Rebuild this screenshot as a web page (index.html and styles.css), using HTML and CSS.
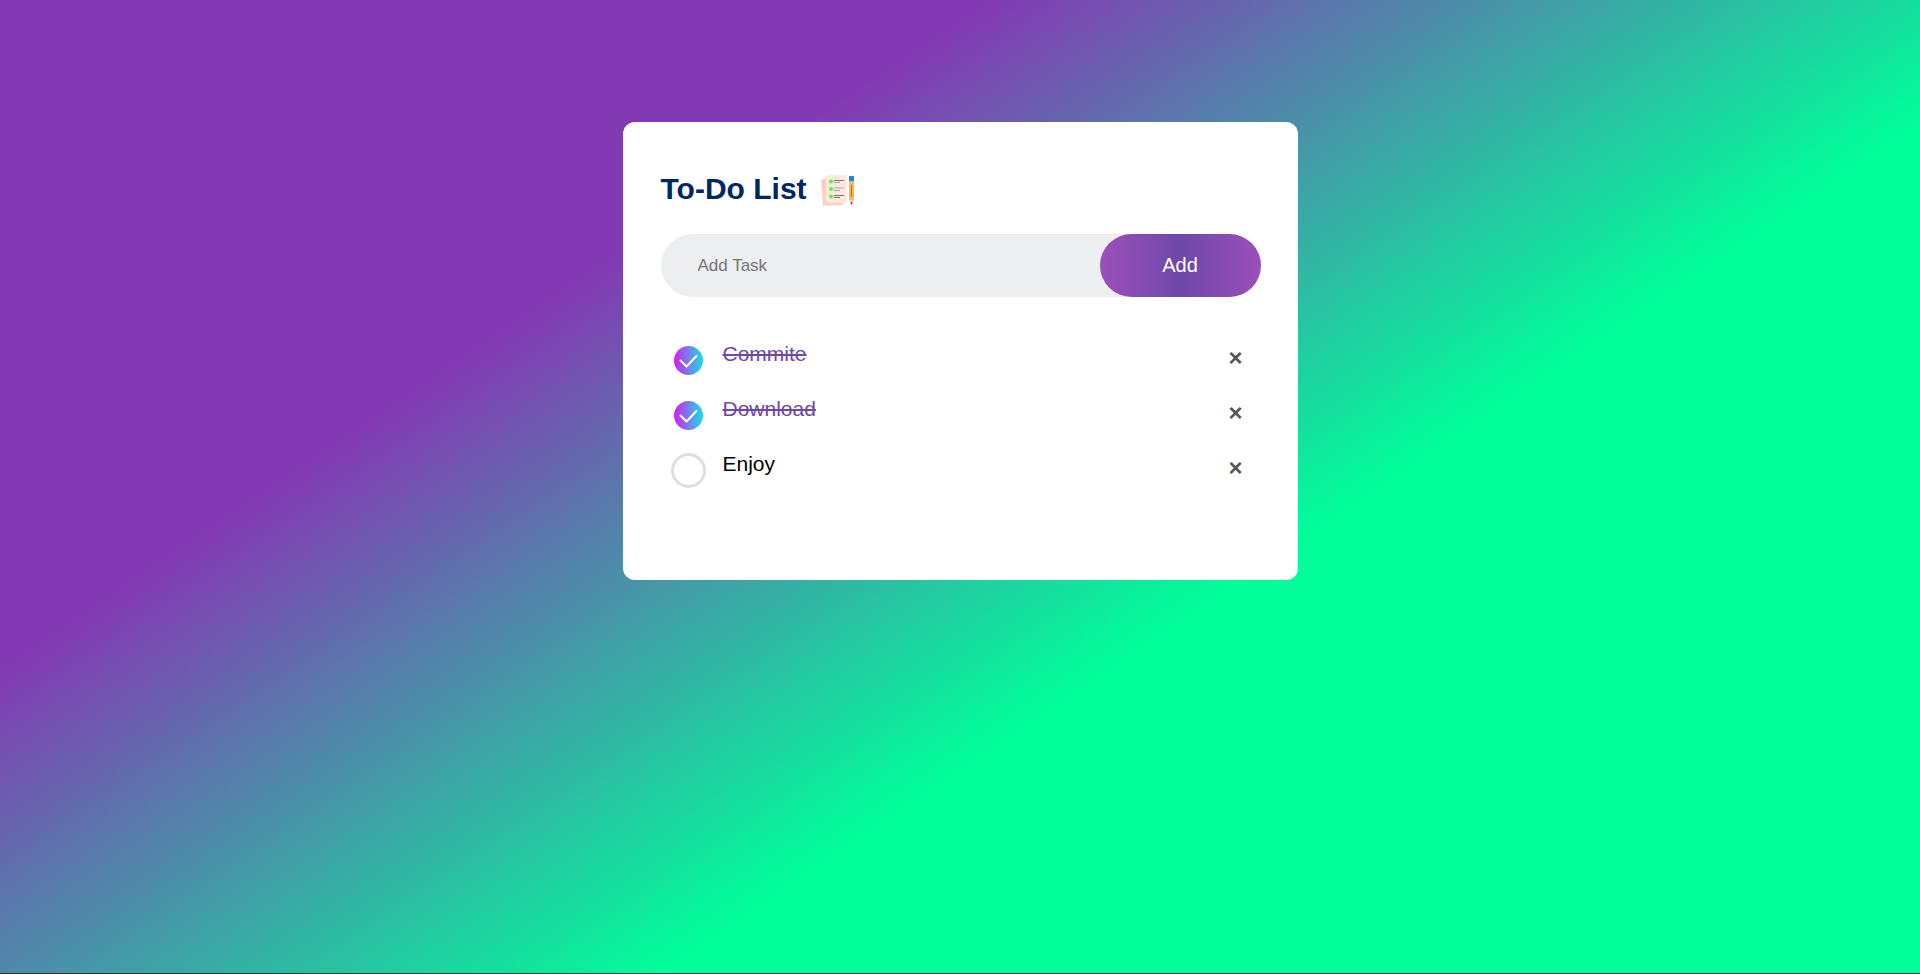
FILE: index.html
```
<!DOCTYPE html>
<html lang="en">
<head>
<meta charset="utf-8">
<title>To-Do List</title>
<link rel="stylesheet" href="styles.css">
</head>
<body>
<main class="todo-app">
  <h1 class="title">To-Do List
    <svg class="title-icon" viewBox="0 0 38 38" aria-hidden="true">
      <path fill="#ffd0c2" d="M2 7l20-1 2 27-20 1z"/>
      <rect x="7" y="3" width="21" height="28" rx="2" fill="#ffe8dc"/>
      <g fill="#3dff3d"><circle cx="12" cy="9.500" r="2"/><circle cx="12" cy="17" r="2"/><circle cx="12" cy="24.500" r="2"/></g>
      <path stroke="#84668f" stroke-width="1" d="M15 8.500h10M15 23.500h10"/>
      <path stroke="#b39aae" stroke-width="1" d="M15 16h10M15 10.500h6M15 18.500h6"/>
      <path stroke="#84668f" stroke-width="1" d="M15 25.500h6"/>
      <path fill="#0c87fa" d="M30 5q0-1 1-1h3q1 0 1 1v4h-5z"/>
      <path fill="#ffb74f" d="M30 9h5v19h-5z"/>
      <path stroke="#a1743c" stroke-width="1" d="M32.500 13v12"/>
      <path fill="#ffc2cc" d="M30 28h5l-1.500 4h-2z"/>
      <path fill="#3a2a3c" d="M31.500 30.500h2l-1 2.500z"/>
    </svg>
  </h1>
  <form class="entry" onsubmit="return false">
    <input class="entry-input" type="text" placeholder="Add Task" aria-label="Add Task">
    <button class="entry-button" type="submit">Add</button>
  </form>
  <ul class="tasks">
    <li class="task">
      <label class="task-label">
        <span class="mark">
          <input class="mark-box" type="checkbox" checked>
          <svg class="mark-tick" viewBox="0 0 35 35" aria-hidden="true"><path d="M9.500 17.500l6 6L25.500 13"/></svg>
        </span>
        <span class="task-text">Commite</span>
      </label>
      <button class="remove" type="button" aria-label="Remove Commite">×</button>
    </li>
    <li class="task">
      <label class="task-label">
        <span class="mark">
          <input class="mark-box" type="checkbox" checked>
          <svg class="mark-tick" viewBox="0 0 35 35" aria-hidden="true"><path d="M9.500 17.500l6 6L25.500 13"/></svg>
        </span>
        <span class="task-text">Download</span>
      </label>
      <button class="remove" type="button" aria-label="Remove Download">×</button>
    </li>
    <li class="task">
      <label class="task-label">
        <span class="mark">
          <input class="mark-box" type="checkbox">
          <svg class="mark-tick" viewBox="0 0 35 35" aria-hidden="true"><path d="M9.500 17.500l6 6L25.500 13"/></svg>
        </span>
        <span class="task-text">Enjoy</span>
      </label>
      <button class="remove" type="button" aria-label="Remove Enjoy">×</button>
    </li>
  </ul>
</main>
</body>
</html>
```
FILE: styles.css
```
* {
  box-sizing: border-box;
  margin: 0;
  padding: 0;
}

body {
  min-height: 100vh;
  padding: 122px 12px 12px;
  border-bottom: 1px solid #333;
  background: linear-gradient(146deg, #8439b4 29.4%, #00ff9a 62.7%) border-box;
  font-family: "Liberation Sans", Arial, sans-serif;
}

.todo-app {
  max-width: 675px;
  margin: 0 auto;
  padding: 50px 37px 88px 38px;
  border-radius: 12px;
  background: #fff;
}

.title {
  display: flex;
  align-items: flex-start;
  gap: 12px;
  margin-bottom: 27px;
  color: #002765;
  font-size: 30px;
  line-height: 34px;
}

.title-icon {
  width: 38px;
  height: 38px;
  margin-bottom: -3px;
  fill: none;
}

.entry {
  display: flex;
  height: 63px;
  margin-bottom: 30px;
  border-radius: 32px;
  background: #edeef0;
}

.entry-input {
  flex: 1;
  min-width: 0;
  padding: 0 37px;
  border: none;
  outline: none;
  background: transparent;
  font: 17px "Liberation Sans", Arial, sans-serif;
}

.entry-input::placeholder {
  color: #757575;
}

.entry-button {
  width: 161px;
  border: none;
  border-radius: 32px;
  background: linear-gradient(90deg, #9b50ba, #6e48aa, #9b50ba);
  color: #fff;
  font: 20px "Liberation Sans", Arial, sans-serif;
  cursor: pointer;
}

.tasks {
  list-style: none;
}

.task {
  display: flex;
  height: 55px;
  padding: 0 10px;
}

.task-label {
  display: flex;
  flex: 1;
  gap: 17px;
  cursor: pointer;
}

.mark {
  display: grid;
  width: 35px;
  height: 35px;
  margin-top: 16px;
}

.mark-box,
.mark-tick {
  grid-area: 1 / 1;
  width: 35px;
  height: 35px;
}

.mark-box {
  appearance: none;
  border: 3px solid #dedede;
  border-radius: 50%;
}

.mark-box:checked {
  border-color: transparent;
  background: linear-gradient(90deg, #d41ef0, #16e0e8) padding-box;
}

.mark-tick {
  visibility: hidden;
  fill: none;
  stroke: #fff;
  stroke-width: 2;
  stroke-linecap: round;
  stroke-linejoin: round;
}

.mark-box:checked + .mark-tick {
  visibility: visible;
}

.task-text {
  padding-top: 14px;
  color: #000;
  font-size: 21px;
  line-height: 25px;
}

.mark:has(:checked) + .task-text {
  color: #6e48aa;
  text-decoration: line-through;
}

.remove {
  width: 30px;
  height: 30px;
  margin-top: 16px;
  border: none;
  background: transparent;
  color: #555;
  font: bold 24px/30px "Liberation Sans", Arial, sans-serif;
  cursor: pointer;
}
```
